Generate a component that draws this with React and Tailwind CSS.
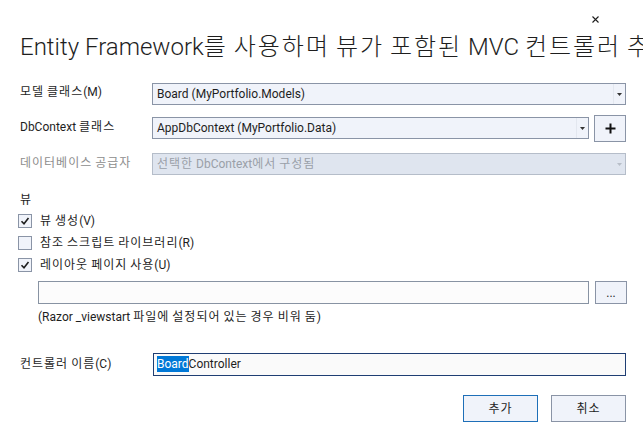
import React from "react";

const FONT = { fontFamily: '"Segoe UI", Roboto, "Noto Sans CJK KR", sans-serif' };

function T({ children, k = "tracking-[1px]" }) {
  const parts = String(children).split(/([가-힣]+)/);
  return (
    <span>
      {parts.map((p, i) =>
        /[가-힣]/.test(p) ? (
          <span key={i} className={k}>
            {p}
          </span>
        ) : (
          <React.Fragment key={i}>{p}</React.Fragment>
        )
      )}
    </span>
  );
}

function Arrow({ color = "#333" }) {
  return (
    <svg width="5" height="3" viewBox="0 0 5 3">
      <path d="M0 0 H5 L2.5 3 Z" fill={color} />
    </svg>
  );
}

function Combo({ text, width, disabled }) {
  return (
    <div
      className={`flex h-[22px] items-stretch border ${disabled ? "border-[#b5bdc9] bg-[#dfe5ef]" : "border-[#8a94a6] bg-[#f0f3fa]"}`}
      style={{ width }}
    >
      <div className={`flex flex-1 items-center whitespace-nowrap pl-[4px] text-[12px] ${disabled ? "text-[#9aa0a8]" : "text-[#1e1e1e]"}`}>
        <T>{text}</T>
      </div>
      <div className={`flex w-[12px] items-center justify-center ${disabled ? "" : "border-l border-[#e3e7ef]"}`}>
        <Arrow color={disabled ? "#b8bec8" : "#333"} />
      </div>
    </div>
  );
}

function Check({ checked, label }) {
  return (
    <div className="flex h-[22px] items-center pl-[18px]">
      <div className="flex h-[14px] w-[14px] items-center justify-center border border-[#8a94a6] bg-[#f0f3fa]">
        {checked && (
          <svg width="10" height="10" viewBox="0 0 10 10">
            <path d="M1.5 5.2 L4 7.8 L8.5 2" stroke="#1e1e1e" strokeWidth="1.6" fill="none" />
          </svg>
        )}
      </div>
      <span className="ml-[8px] whitespace-nowrap text-[12px] text-[#1e1e1e]">
        <T>{label}</T>
      </span>
    </div>
  );
}

export default function App() {
  return (
    <div className="relative h-[434px] w-[643px] overflow-hidden bg-white" style={FONT}>
      <div className="flex h-[31px] justify-end pr-[44px] pt-[16px]">
        <svg width="7" height="7" viewBox="0 0 7 7">
          <path d="M0.5 0.5 L6.5 6.5 M6.5 0.5 L0.5 6.5" stroke="#1e1e1e" strokeWidth="1.1" />
        </svg>
      </div>
      <div className="h-[32px] overflow-hidden whitespace-nowrap pl-[20px] text-[24px] font-light leading-[32px] text-[#1e1e1e]">
        <T k="tracking-[2px]">Entity Framework를 사용하며 뷰가 포함된 MVC 컨트롤러 추가</T>
      </div>

      <div className="mt-[20px] flex h-[22px] items-center">
        <div className="-mt-[4px] w-[152px] whitespace-nowrap pl-[20px] text-[12px] text-[#1e1e1e]">
          <T>모델 클래스(M)</T>
        </div>
        <Combo text="Board (MyPortfolio.Models)" width={474} />
      </div>

      <div className="mt-[12px] flex h-[22px] items-center">
        <div className="-mt-[2px] w-[152px] whitespace-nowrap pl-[20px] text-[12px] text-[#1e1e1e]">
          <T>DbContext 클래스</T>
        </div>
        <Combo text="AppDbContext (MyPortfolio.Data)" width={437} />
        <div className="ml-[5px] flex h-[27px] w-[32px] items-center justify-center border border-[#8a94a6] bg-[#f0f3fa]">
          <svg width="11" height="11" viewBox="0 0 11 11">
            <path d="M5.5 0.5 V10.5 M0.5 5.5 H10.5" stroke="#111" strokeWidth="2" />
          </svg>
        </div>
      </div>

      <div className="mt-[14px] flex h-[22px] items-center">
        <div className="-mt-[2px] w-[152px] whitespace-nowrap pl-[20px] text-[12px] text-[#8d8d8d]">
          <T>데이터베이스 공급자</T>
        </div>
        <Combo text="선택한 DbContext에서 구성됨" width={474} disabled />
      </div>

      <div className="mt-[17px] h-[16px] pl-[20px] text-[12px] leading-[16px] text-[#1e1e1e]">뷰</div>

      <div className="mt-[2px] flex flex-col">
        <Check checked label="뷰 생성(V)" />
        <Check label="참조 스크립트 라이브러리(R)" />
        <Check checked label="레이아웃 페이지 사용(U)" />
      </div>

      <div className="mt-[5px] flex h-[23px] items-stretch pl-[38px]">
        <div className="w-[551px] border border-[#8893a3] bg-[#fcfcfc]" />
        <div className="ml-[6px] flex w-[32px] items-center justify-center border border-[#8a94a6] bg-[#f0f3fa] text-[12px] leading-none text-[#1e1e1e]">
          ...
        </div>
      </div>

      <div className="mt-[5px] h-[16px] whitespace-nowrap pl-[38px] text-[12px] leading-[16px] text-[#1e1e1e]">
        <T>(Razor _viewstart 파일에 설정되어 있는 경우 비워 둠)</T>
      </div>

      <div className="mt-[28px] flex h-[22px] items-center">
        <div className="w-[153px] whitespace-nowrap pl-[20px] text-[12px] text-[#1e1e1e]">
          <T>컨트롤러 이름(C)</T>
        </div>
        <div className="flex h-[23px] w-[473px] items-center border border-[#1f3e73] bg-[#fafafa] pl-[3px] text-[12px] text-[#1e1e1e]">
          <span className="bg-[#0078d7] leading-[16px] text-white">Board</span>
          <span className="leading-[16px]">Controller</span>
        </div>
      </div>

      <div className="mt-[20px] flex justify-end gap-[13px] pr-[17px]">
        <div className="flex h-[27px] w-[75px] items-center justify-center border border-[#1e6fb8] bg-[#f0f3fa] text-[12px] text-[#1e1e1e]">
          <T>추가</T>
        </div>
        <div className="flex h-[27px] w-[75px] items-center justify-center border border-[#8a94a6] bg-[#f0f3fa] text-[12px] text-[#1e1e1e]">
          <T>취소</T>
        </div>
      </div>
    </div>
  );
}
